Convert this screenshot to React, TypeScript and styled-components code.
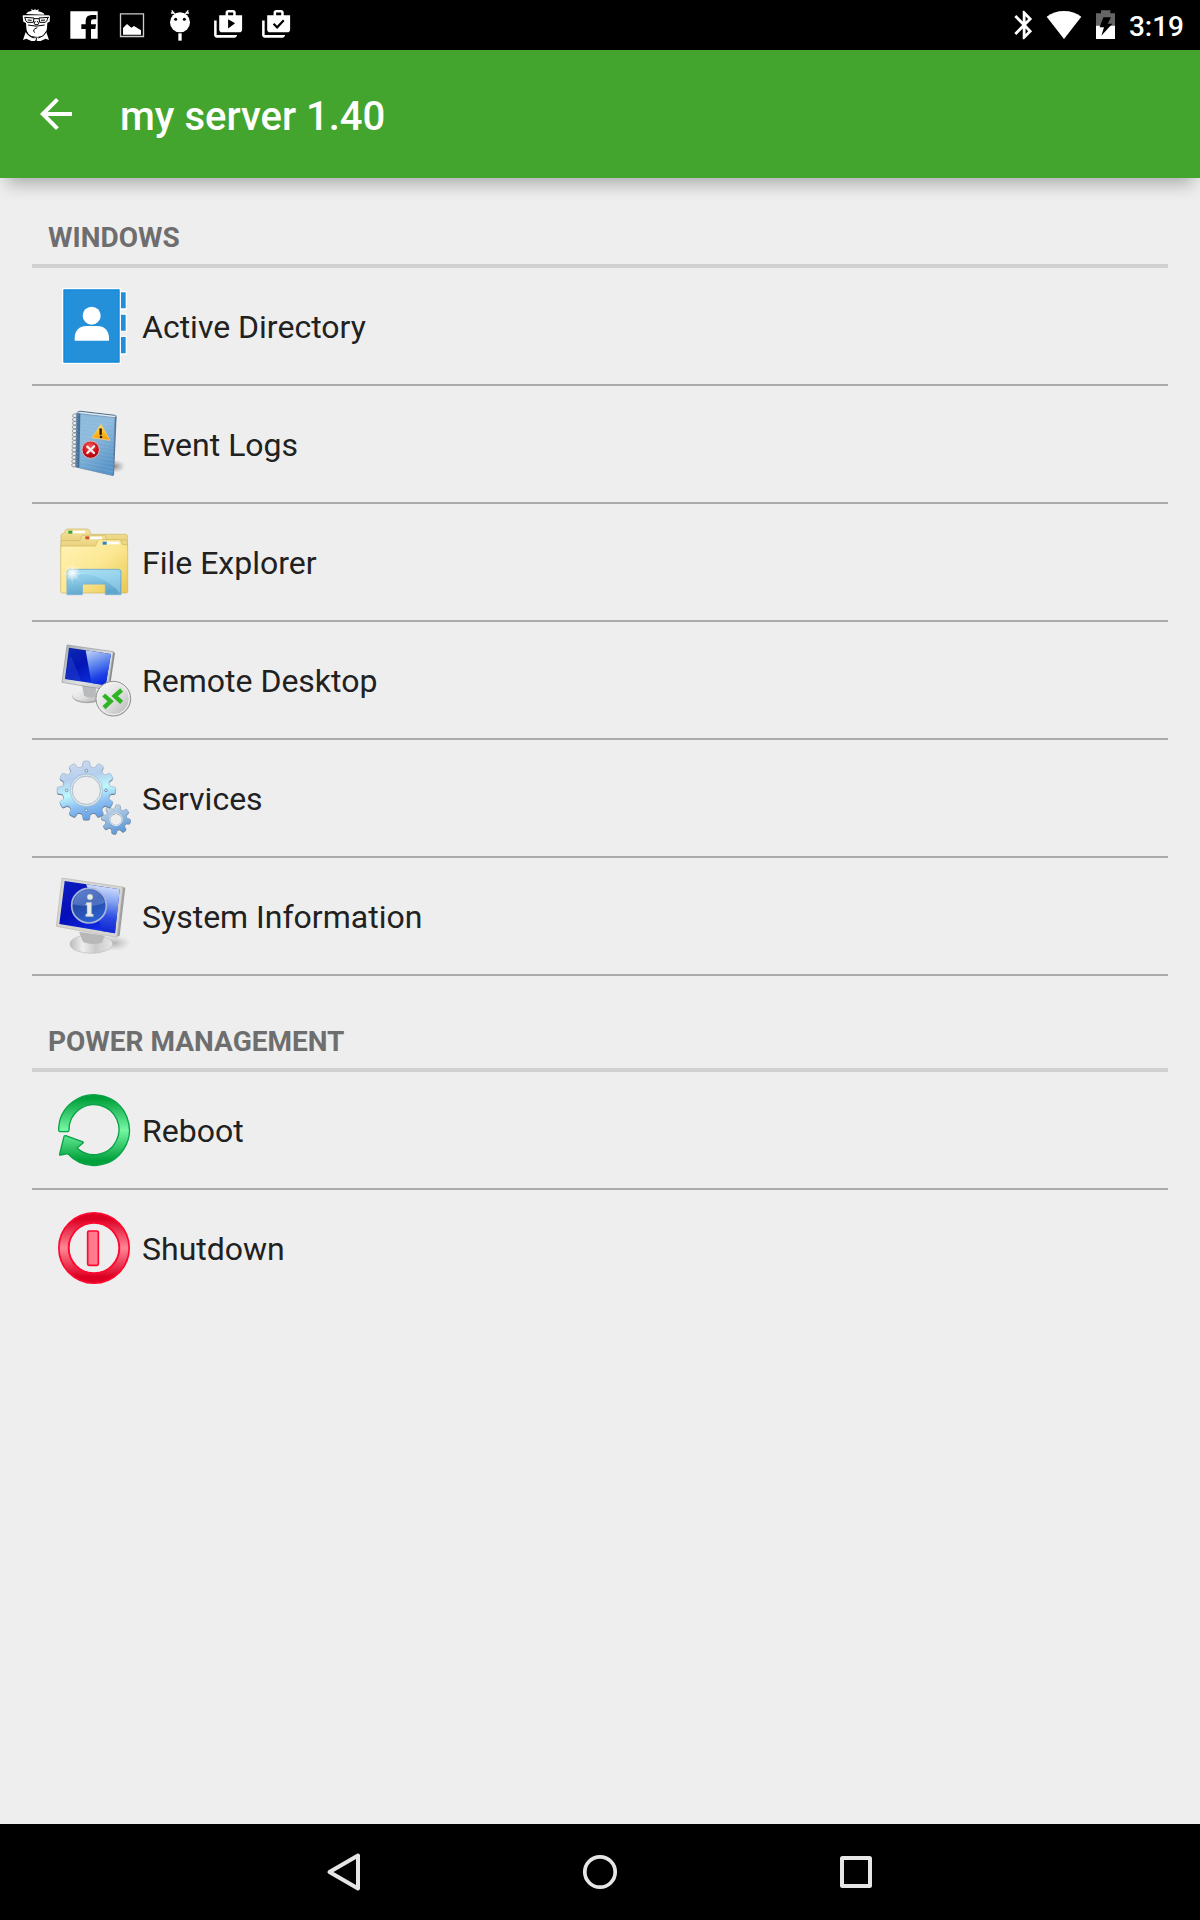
import React from 'react';
import styled, { createGlobalStyle } from 'styled-components';

const GlobalStyle = createGlobalStyle`
  body {
    margin: 0;
    background-color: #eeeeee;
    font-family: Roboto, 'Noto Sans', sans-serif;
  }
  svg {
    display: block;
    flex-shrink: 0;
  }
`;
const Screen = styled.div`
  display: flex;
  flex-direction: column;
  width: 1200px;
  height: 1920px;
  overflow: hidden;
  background-color: #eeeeee;
`;
const StatusBar = styled.div`
  display: flex;
  justify-content: space-between;
  height: 50px;
  padding: 0 16px 0 12px;
  background-color: #000;
  color: #fff;
`;
const StatusGroup = styled.div`
  display: flex;
  align-items: center;
`;
const Clock = styled.span`
  margin-left: 6px;
  padding-top: 3px;
  font-size: 28px;
  font-weight: 500;
  line-height: 34px;
`;
const Toolbar = styled.header`
  display: flex;
  align-items: center;
  height: 128px;
  padding-left: 32px;
  box-sizing: border-box;
  flex-shrink: 0;
  background-color: #43a52d;
  color: #fff;
  box-shadow: 0 13px 16px -7px rgba(0, 0, 0, 0.28);
`;
const Title = styled.h1`
  margin: 6px 0 0 40px;
  font-size: 40px;
  font-weight: 500;
  line-height: 48px;
`;
const Content = styled.main`
  flex: 1;
  padding: 26px 32px 0;
`;
const SectionTitle = styled.h2`
  margin: 0;
  height: 60px;
  padding: 0 16px;
  border-bottom: 4px solid #d0d0d0;
  color: #6e6e6e;
  font-size: 28px;
  font-weight: 700;
  line-height: 68px;
  text-transform: uppercase;
`;
const Section = styled.section`
  & + & {
    margin-top: 32px;
  }
`;
const List = styled.ul`
  margin: 0;
  padding: 0;
  list-style: none;
`;
const Item = styled.li<{ $divider: boolean }>`
  display: flex;
  align-items: center;
  height: 116px;
  padding-left: 22px;
  border-bottom: ${({ $divider }) => ($divider ? '2px solid #a9a9a9' : 'none')};
`;
const ItemLabel = styled.span`
  margin-left: 8px;
  padding-top: 2px;
  color: #212121;
  font-size: 32px;
  line-height: 38px;
`;
const NavBar = styled.nav`
  display: flex;
  justify-content: center;
  height: 96px;
  background-color: #000;
`;
const NavButton = styled.button`
  display: flex;
  align-items: center;
  justify-content: center;
  width: 256px;
  padding: 0;
  border: 0;
  background: none;
`;

type IconProps = {
  viewBox: string;
  children: React.ReactNode;
};

// every list icon is drawn on a 240 unit grid
function ListIcon({ viewBox, children }: IconProps) {
  return (
    <svg width="80" height="80" viewBox={viewBox}>
      {children}
    </svg>
  );
}

function NotificationIcon({ viewBox, children }: IconProps) {
  return (
    <svg width="48" height="50" viewBox={viewBox} fill="#fff">
      {children}
    </svg>
  );
}

function gearPath(cx: number, cy: number, outer: number, root: number, hole: number, teeth: number, turn = 0) {
  const step = (Math.PI * 2) / teeth;
  const at = (r: number, a: number) =>
    `${(cx + r * Math.sin(a)).toFixed(1)} ${(cy - r * Math.cos(a)).toFixed(1)}`;
  let d = '';
  for (let i = 0; i < teeth; i += 1) {
    const a = i * step + turn;
    d += `${i ? 'L' : 'M'}${at(root, a - step * 0.31)}L${at(outer - 3, a - step * 0.23)}`;
    d += `Q${at(outer, a - step * 0.2)} ${at(outer, a - step * 0.12)}L${at(outer, a + step * 0.12)}`;
    d += `Q${at(outer, a + step * 0.2)} ${at(outer - 3, a + step * 0.23)}L${at(root, a + step * 0.31)}`;
    d += `Q${at(root - 4, a + step * 0.5)} ${at(root, a + step * 0.69)}`;
  }
  return `${d}ZM${cx - hole} ${cy}a${hole} ${hole} 0 1 0 ${hole * 2} 0a${hole} ${hole} 0 1 0 ${-hole * 2} 0Z`;
}

function ActiveDirectoryIcon() {
  return (
    <ListIcon viewBox="72 48 240 240">
      <g fill="#1f8fdb" stroke="#fff" strokeWidth="4">
        <path d="M271 65h18v52h-18zM271 132h18v52h-18zM271 199h18v53h-18z" />
        <path d="M98 56h173v224H98z" />
      </g>
      <path
        d="M102.500 60.500h164v215h-164z"
        fill="#2490da"
        stroke="#0d86dc"
        strokeWidth="2"
      />
      <circle cx="185" cy="137" r="27" fill="#fff" />
      <path d="M134 212v-8c0-22 14-36 36-36h31c22 0 36 14 36 36v8z" fill="#fff" />
    </ListIcon>
  );
}

function EventLogsIcon() {
  const rings = Array.from({ length: 14 }, (_, i) => i);
  return (
    <ListIcon viewBox="12 27 240 240">
      <defs>
        <linearGradient id="book" x1="0" y1="0" x2="0.5" y2="1">
          <stop offset="0" stopColor="#8db8d9" />
          <stop offset="0.45" stopColor="#8ebbdd" />
          <stop offset="1" stopColor="#5b96c8" />
        </linearGradient>
        <linearGradient id="warn" x1="0" y1="0" x2="0" y2="1">
          <stop offset="0" stopColor="#ffe36a" />
          <stop offset="0.55" stopColor="#ffb91e" />
          <stop offset="1" stopColor="#f79a0c" />
        </linearGradient>
        <radialGradient id="error" cx="0.45" cy="0.3" r="0.7">
          <stop offset="0" stopColor="#ee5b5b" />
          <stop offset="0.6" stopColor="#cf1218" />
          <stop offset="1" stopColor="#a5060c" />
        </radialGradient>
        <radialGradient id="bookShadow">
          <stop offset="0" stopColor="#777" stopOpacity="0.8" />
          <stop offset="1" stopColor="#999" stopOpacity="0" />
        </radialGradient>
      </defs>
      <ellipse cx="194" cy="214" rx="32" ry="20" fill="url(#bookShadow)" />
      <path d="M79 52l11-5 109 13-4 5z" fill="#47688a" />
      <path d="M90 50l104 12 6-2-5 8-113-13z" fill="#e4ebf1" />
      <path d="M193 68l7-7-8 179-6 4z" fill="#54708d" />
      <path d="M80 55l115 13-6 174-112-26z" fill="url(#book)" stroke="#5d87ad" strokeWidth="2" />
      <path d="M80 55l11 1-3 162-11-2z" fill="#416f9e" />
      <g stroke="#b4d4ec" strokeWidth="1.500" opacity="0.35">
        {rings.map((i) => (
          <path key={i} d={`M92 ${68 + i * 11}l100 ${11 + i * 0.7}`} />
        ))}
      </g>
      <g fill="none" stroke="#858d94" strokeWidth="3">
        {rings.map((i) => (
          <path key={i} d={`M${86 - i * 0.2} ${62 + i * 11.400}c-6-7-17-7-18 0s10 6 15 3`} />
        ))}
      </g>
      <path
        d="M153 88l27 48-54-8z"
        fill="url(#warn)"
        stroke="#ebc77b"
        strokeWidth="3"
        strokeLinejoin="round"
      />
      <path d="M152 103v14" stroke="#211b12" strokeWidth="7" strokeLinecap="round" />
      <circle cx="153" cy="126" r="4" fill="#211b12" />
      <circle cx="122" cy="164" r="26" fill="url(#error)" stroke="#d9b5b8" strokeWidth="3" />
      <path d="M112 155l20 19M132 154l-20 20" stroke="#f0eded" strokeWidth="7" strokeLinecap="round" />
    </ListIcon>
  );
}

function FileExplorerIcon() {
  return (
    <ListIcon viewBox="12 21 240 240">
      <defs>
        <linearGradient id="folder" x1="0" y1="0" x2="1" y2="1">
          <stop offset="0" stopColor="#fff3b6" />
          <stop offset="0.5" stopColor="#fce894" />
          <stop offset="1" stopColor="#e9c751" />
        </linearGradient>
        <linearGradient id="folderBack" x1="0" y1="0" x2="0" y2="1">
          <stop offset="0" stopColor="#f3e29a" />
          <stop offset="1" stopColor="#e6ca6e" />
        </linearGradient>
        <linearGradient id="tray" x1="0" y1="0" x2="0.3" y2="1">
          <stop offset="0" stopColor="#a6def4" />
          <stop offset="0.5" stopColor="#85c6e4" />
          <stop offset="1" stopColor="#61a5cc" />
        </linearGradient>
        <radialGradient id="glow">
          <stop offset="0" stopColor="#fff" />
          <stop offset="0.2" stopColor="#fff" stopOpacity="0.75" />
          <stop offset="1" stopColor="#fff" stopOpacity="0" />
        </radialGradient>
      </defs>
      <g fill="url(#folderBack)" stroke="#cdb469" strokeWidth="2" strokeLinejoin="round">
        <path d="M33 100V61q0-3 3-4l7-3 4-9q1-3 5-3h60q4 0 6 4l5 12h104q5 0 5 5v37z" />
        <path d="M33 110V80q0-3 4-3h52l5-12q1-4 5-4h62q4 0 6 4l4 10h56q5 0 5 5v30z" />
      </g>
      <path
        d="M32 98q0-5 5-5h100l6-16q1-3 5-3h59q4 0 6 4l4 11h11q5 0 5 5v136q0 4-5 4H37q-5 0-5-4z"
        fill="url(#folder)"
        stroke="#cfb35f"
        strokeWidth="2"
      />
      <path d="M67 47h38v8H67zM119 65h37v8h-37zM170 80h38v8h-38z" fill="#fff" />
      <path d="M55 47h12v9H55z" fill="#3da33a" />
      <path d="M106 64h12v9h-12z" fill="#d35320" />
      <path d="M158 80h12v9h-12z" fill="#2d83c8" />
      <path
        d="M51 239v-68q0-8 8-8h146q8 0 8 8v68h-47v-29q0-3-3-3h-63q-3 0-3 3v29z"
        fill="url(#tray)"
        stroke="#7cb3cf"
        strokeWidth="3"
        strokeLinejoin="round"
      />
      <path d="M54 178q75-8 123 27 22 15 33 30v-62q0-7-7-7H60q-6 0-6 6z" fill="#b2e5f8" opacity="0.4" />
      <circle cx="67" cy="174" r="24" fill="url(#glow)" />
      <path
        d="M67 137l3 32 26-19-21 23 36 2-36 4 20 22-25-16-3 28-4-28-22 16 16-21-25-4 26-4-19-21 24 16z"
        fill="#fff"
        opacity="0.2"
      />
    </ListIcon>
  );
}

function RemoteDesktopIcon() {
  return (
    <ListIcon viewBox="12 30 240 240">
      <defs>
        <linearGradient id="rdScreen" x1="0" y1="0" x2="0.8" y2="1">
          <stop offset="0" stopColor="#0c2cae" />
          <stop offset="0.45" stopColor="#0414b4" />
          <stop offset="1" stopColor="#0b37e8" />
        </linearGradient>
        <linearGradient id="rdShine" x1="0.3" y1="0" x2="0.6" y2="1">
          <stop offset="0" stopColor="#b4caf6" />
          <stop offset="0.4" stopColor="#5c84ee" />
          <stop offset="0.75" stopColor="#1c40e6" />
          <stop offset="1" stopColor="#0a25dc" />
        </linearGradient>
        <linearGradient id="rdBezel" x1="0" y1="0" x2="1" y2="1">
          <stop offset="0" stopColor="#a8adb3" />
          <stop offset="0.6" stopColor="#e0e2e2" />
          <stop offset="1" stopColor="#b6b8ba" />
        </linearGradient>
        <linearGradient id="metal" x1="0" y1="0" x2="1" y2="1">
          <stop offset="0" stopColor="#f8f8f8" />
          <stop offset="0.55" stopColor="#dedede" />
          <stop offset="1" stopColor="#b0b0b0" />
        </linearGradient>
      </defs>
      <ellipse cx="112" cy="198" rx="45" ry="22" fill="#aaa" />
      <ellipse cx="110" cy="195" rx="43" ry="20" fill="url(#metal)" />
      <path d="M96 164l42 8-1 29q-20 6-35-4z" fill="#b8babb" />
      <path d="M188 66l7 2-17 115-8-1z" fill="#86898d" />
      <path d="M51 45l139 20-16 115L36 157z" fill="url(#rdBezel)" stroke="#93979b" strokeWidth="2" />
      <path d="M57 53l126 19-16 94L45 147z" fill="url(#rdScreen)" />
      <path d="M107 61l76 11-16 94-43-7z" fill="url(#rdShine)" />
      <path d="M57 85l7-4 30 73-49-8z" fill="#2548d1" opacity="0.45" />
      <circle cx="190" cy="206" r="52" fill="url(#metal)" stroke="#929292" strokeWidth="3" />
      <circle cx="190" cy="206" r="48" fill="none" stroke="#f4f4f4" strokeWidth="3" />
      <path
        d="M161 195l21 19-20 19M215 180l-21 18 21 19"
        fill="none"
        stroke="#2fb424"
        strokeWidth="13"
      />
    </ListIcon>
  );
}

function ServicesIcon() {
  return (
    <ListIcon viewBox="12 24 240 240">
      <defs>
        <linearGradient id="gearBig" x1="0.35" y1="0" x2="0.6" y2="1">
          <stop offset="0" stopColor="#cddaec" />
          <stop offset="0.28" stopColor="#b4cfee" />
          <stop offset="0.52" stopColor="#bef8fd" />
          <stop offset="0.74" stopColor="#8fc0f1" />
          <stop offset="1" stopColor="#5f9ce4" />
        </linearGradient>
        <linearGradient id="gearSmall" x1="0" y1="0" x2="0.4" y2="1">
          <stop offset="0" stopColor="#dde3e9" />
          <stop offset="0.5" stopColor="#9cbfe0" />
          <stop offset="1" stopColor="#5f9ad8" />
        </linearGradient>
      </defs>
      <path
        d={gearPath(198, 210, 44, 34, 18, 8, 0.15)}
        fill="#64788c"
        fillRule="evenodd"
      />
      <path
        d={gearPath(198, 208, 44, 34, 18, 8, 0.15)}
        fill="url(#gearSmall)"
        fillRule="evenodd"
        stroke="#7c96b2"
        strokeWidth="1.500"
      />
      <circle cx="198" cy="208" r="19" fill="none" stroke="#dce7ee" strokeWidth="3" />
      <path d={gearPath(109, 124, 88, 73, 48, 12)} fill="#59728c" fillRule="evenodd" />
      <path
        d={gearPath(109, 121, 88, 73, 44, 12)}
        fill="url(#gearBig)"
        fillRule="evenodd"
        stroke="#8ba5c1"
        strokeWidth="1.500"
      />
      <circle cx="109" cy="121" r="46" fill="none" stroke="#d9e6ec" strokeWidth="5" />
      <circle cx="109" cy="121" r="49" fill="none" stroke="#8eabc4" strokeWidth="1.500" />
      <circle cx="109" cy="121" r="42" fill="none" stroke="#8da7bb" strokeWidth="1.500" />
      <g fill="#e9f4fa" stroke="#5c84a8" strokeWidth="2.500">
        <circle cx="109" cy="62" r="4" />
        <circle cx="50" cy="121" r="4" />
        <circle cx="168" cy="121" r="4" />
        <circle cx="109" cy="181" r="4" />
      </g>
    </ListIcon>
  );
}

function SystemInfoIcon() {
  return (
    <ListIcon viewBox="12 33 240 240">
      <defs>
        <linearGradient id="siScreen" x1="0" y1="0" x2="0.7" y2="1">
          <stop offset="0" stopColor="#0d1fc0" />
          <stop offset="0.5" stopColor="#040eb8" />
          <stop offset="1" stopColor="#1230ea" />
        </linearGradient>
        <linearGradient id="siShine" x1="0.5" y1="0" x2="0.4" y2="1">
          <stop offset="0" stopColor="#d6e3fd" />
          <stop offset="0.3" stopColor="#8aa8f2" />
          <stop offset="0.65" stopColor="#2c4ce0" />
          <stop offset="1" stopColor="#0c20d0" />
        </linearGradient>
        <linearGradient id="siBadge" x1="0" y1="0" x2="0.4" y2="1">
          <stop offset="0" stopColor="#4b6fc8" />
          <stop offset="0.5" stopColor="#2449a6" />
          <stop offset="1" stopColor="#2b60cf" />
        </linearGradient>
        <radialGradient id="siShadow">
          <stop offset="0" stopColor="#888" stopOpacity="0.6" />
          <stop offset="1" stopColor="#aaa" stopOpacity="0" />
        </radialGradient>
        <linearGradient id="siBase" x1="0" y1="0" x2="1" y2="0">
          <stop offset="0" stopColor="#bcbcbc" />
          <stop offset="0.3" stopColor="#eeeeee" />
          <stop offset="0.6" stopColor="#cacaca" />
          <stop offset="1" stopColor="#e6e6e6" />
        </linearGradient>
      </defs>
      <ellipse cx="190" cy="234" rx="52" ry="24" fill="url(#siShadow)" />
      <ellipse cx="124" cy="237" rx="64" ry="28" fill="url(#siBase)" stroke="#bdbdbd" strokeWidth="2" />
      <path d="M87 200l78 12-10 21q-28 9-56-2z" fill="#b8b8b8" />
      <path d="M216 65l10 3-17 144-13 5z" fill="#9d9fa0" />
      <path d="M36 39l183 27-18 151L19 184z" fill="#d6d5cf" stroke="#b5b5b1" strokeWidth="2" />
      <path d="M44 48l165 25-14 132L28 177z" fill="url(#siScreen)" />
      <path d="M108 58l101 15-14 132-40-7q-12-67-47-140z" fill="url(#siShine)" />
      <circle cx="117" cy="122" r="52" fill="url(#siBadge)" stroke="#a7b6d6" strokeWidth="5" />
      <path d="M69 118q9-43 47-43t49 38q-44 18-96 5z" fill="#87a5e4" opacity="0.4" />
      <g fill="#e6ebe8" stroke="#8496a5" strokeWidth="1.500">
        <circle cx="120" cy="96" r="9" />
        <path d="M110 112h15v35h5v8h-23v-8h4v-27h-5z" />
      </g>
    </ListIcon>
  );
}

function RebootIcon() {
  return (
    <ListIcon viewBox="72 390 240 240">
      <defs>
        <linearGradient id="green" x1="0" y1="0" x2="0" y2="1">
          <stop offset="0.05" stopColor="#00a03a" />
          <stop offset="0.5" stopColor="#76f7a5" />
          <stop offset="0.93" stopColor="#00a03a" />
        </linearGradient>
      </defs>
      <path
        d="M90 515q-4 0-4-5A106 106 0 1 1 113 581L92 585q-4 1-3-3l13-52q1-4 5-3l50 18q5 2 1 5l-17 14A75 75 0 1 0 117 510q0 5-4 5z"
        fill="url(#green)"
        stroke="#08a246"
        strokeWidth="4"
        strokeLinejoin="round"
      />
    </ListIcon>
  );
}

function ShutdownIcon() {
  return (
    <ListIcon viewBox="72 84 240 240">
      <defs>
        <linearGradient id="red" x1="0" y1="0" x2="0" y2="1">
          <stop offset="0.08" stopColor="#dc0023" />
          <stop offset="0.5" stopColor="#ff8796" />
          <stop offset="0.92" stopColor="#dc0023" />
        </linearGradient>
      </defs>
      <circle cx="192" cy="204" r="90.500" fill="none" stroke="#ff0830" strokeWidth="35" />
      <path
        d="M89 204a103 103 0 1 0 206 0a103 103 0 1 0-206 0M113 204a79 79 0 1 1 158 0a79 79 0 1 1-158 0"
        fill="url(#red)"
        fillRule="evenodd"
      />
      <rect x="173" y="153" width="32" height="103" rx="4" fill="#ff7b8d" stroke="#ff0830" strokeWidth="5" />
    </ListIcon>
  );
}

const sections = [
  {
    title: 'Windows',
    trailingDivider: true,
    items: [
      { label: 'Active Directory', Icon: ActiveDirectoryIcon },
      { label: 'Event Logs', Icon: EventLogsIcon },
      { label: 'File Explorer', Icon: FileExplorerIcon },
      { label: 'Remote Desktop', Icon: RemoteDesktopIcon },
      { label: 'Services', Icon: ServicesIcon },
      { label: 'System Information', Icon: SystemInfoIcon },
    ],
  },
  {
    title: 'Power Management',
    trailingDivider: false,
    items: [
      { label: 'Reboot', Icon: RebootIcon },
      { label: 'Shutdown', Icon: ShutdownIcon },
    ],
  },
];

function Notifications() {
  return (
    <StatusGroup>
      <NotificationIcon viewBox="36 0 144 150">
        <path d="M78 42q6-9 17-9l-2-6 9 4 3-5 3 5 9-3-3 6q15 2 20 10z" />
        <path d="M69 46h78l3 3-1 16-7 3-1 15q-1 17-14 25l-16 3-17-3q-15-8-15-25l-1-14-8-4-2-16z" />
        <path d="M77 96q8 16 31 17 23-1 31-17l8 24-10-4-15 7h-10l-4-4-4 4H94l-15-7-10 4z" />
        <g fill="none" stroke="#000" strokeWidth="3">
          <path d="M73 52l29 2-2 13H82q-6-4-7-13M147 52l-30 2 2 13h17q6-4 7-13M102 56h15" />
          <path d="M83 60l12 1M123 61l12-1M106 63q-6 8-1 11h9q5-3-2-11M84 75q24 7 50 0M104 98q-9-10 8-15M79 94q6 16 24 20M139 94q-6 16-24 20M109 114v6" />
        </g>
      </NotificationIcon>
      <NotificationIcon viewBox="180 0 144 150">
        <path d="M211 34h82v82h-20V87h13l2-14h-15v-9q0-6 7-6h9V45h-14q-18 0-18 18v10h-13v14h13v29h-46z" />
      </NotificationIcon>
      <NotificationIcon viewBox="324 0 144 150">
        <path d="M361.500 41.500h69v68h-69z" fill="none" stroke="#c9cec9" strokeWidth="4" />
        <path d="M369 104V84l12-12 13 11 8-5 21 13v13z" />
      </NotificationIcon>
      <NotificationIcon viewBox="468 0 144 150">
        <circle cx="540" cy="67" r="30" />
        <path d="M535 100h10v22h-10z" />
        <path d="M515 31l10 12M513 39h9M565 31l-10 12M567 39h-9" stroke="#fff" strokeWidth="4" />
        <circle cx="527" cy="58" r="4.500" fill="#000" />
        <circle cx="553" cy="58" r="4.500" fill="#000" />
      </NotificationIcon>
      <NotificationIcon viewBox="612 0 144 150">
        <g transform="translate(638.5 26) scale(3.82 3.95)">
          <path d="M3 9H1v11c0 1.110.89 2 2 2h14c1.110 0 2-.89 2-2H3V9z" />
          <path d="M18 5V3c0-1.110-.89-2-2-2h-4c-1.110 0-2 .89-2 2v2H5v11c0 1.110.89 2 2 2h14c1.110 0 2-.89 2-2V5h-5zm-6-2h4v2h-4V3zm0 12V8l5.500 3-5.500 4z" />
        </g>
      </NotificationIcon>
      <NotificationIcon viewBox="756 0 144 150">
        <g transform="translate(782.5 26) scale(3.82 3.95)">
          <path d="M3 9H1v11c0 1.110.89 2 2 2h14c1.110 0 2-.89 2-2H3V9z" />
          <path d="M18 5V3c0-1.110-.89-2-2-2h-4c-1.110 0-2 .89-2 2v2H5v11c0 1.110.89 2 2 2h14c1.110 0 2-.89 2-2V5h-5zm-6-2h4v2h-4V3z" />
          <path d="M10 11.500l2.800 2.700 5.200-5.400" fill="none" stroke="#000" strokeWidth="1.700" />
        </g>
      </NotificationIcon>
    </StatusGroup>
  );
}

function SystemStatus() {
  return (
    <StatusGroup>
      <svg width="36" height="50" viewBox="45 0 108 150">
        <path
          transform="translate(52 23.5) scale(4.2 4.3)"
          d="M17.710 7.710L12 2h-1v7.590L6.410 5 5 6.410 10.590 12 5 17.590 6.410 19 11 14.410V22h1l5.710-5.710-4.300-4.290 4.300-4.290zM13 5.830l1.880 1.880L13 9.590V5.830zm1.880 10.460L13 18.170v-3.760l1.880 1.880z"
          fill="#fff"
        />
      </svg>
      <svg width="46" height="50" viewBox="153 0 138 150">
        <path d="M170 50q22-17 52-17t52 17l-52 67z" fill="#fff" />
      </svg>
      <svg width="36" height="50" viewBox="291 0 108 150">
        <path d="M318 77V40h15v-9h28v9h14v37z" fill="#666" />
        <path d="M318 77h57v40h-57z" fill="#fff" />
        <path d="M340 52h23l-10 19h14l-33 36 8-25h-13z" />
      </svg>
      <Clock>3:19</Clock>
    </StatusGroup>
  );
}

function App() {
  return (
    <>
      <GlobalStyle />
      <Screen>
        <StatusBar>
          <Notifications />
          <SystemStatus />
        </StatusBar>
        <Toolbar>
          <svg width="48" height="48" viewBox="0 0 24 24" fill="#fff">
            <path d="M20 11H7.830l5.590-5.590L12 4l-8 8 8 8 1.410-1.410L7.830 13H20v-2z" />
          </svg>
          <Title>my server 1.40</Title>
        </Toolbar>
        <Content>
          {sections.map(({ title, trailingDivider, items }) => (
            <Section key={title}>
              <SectionTitle>{title}</SectionTitle>
              <List>
                {items.map(({ label, Icon }, i) => (
                  <Item key={label} $divider={trailingDivider || i < items.length - 1}>
                    <Icon />
                    <ItemLabel>{label}</ItemLabel>
                  </Item>
                ))}
              </List>
            </Section>
          ))}
        </Content>
        <NavBar>
          <NavButton aria-label="Back">
            <svg width="40" height="40" viewBox="0 0 40 40" fill="none" stroke="#e6e6e6" strokeWidth="4">
              <path d="M34 3.500v33L5.500 20z" strokeLinejoin="round" />
            </svg>
          </NavButton>
          <NavButton aria-label="Home">
            <svg width="40" height="40" viewBox="0 0 40 40" fill="none" stroke="#e6e6e6" strokeWidth="3.700">
              <circle cx="20" cy="20" r="15.200" />
            </svg>
          </NavButton>
          <NavButton aria-label="Recent apps">
            <svg width="40" height="40" viewBox="0 0 40 40" fill="none" stroke="#e6e6e6" strokeWidth="4">
              <rect x="6" y="6" width="28" height="28" rx="0.500" strokeLinejoin="round" />
            </svg>
          </NavButton>
        </NavBar>
      </Screen>
    </>
  );
}

export default App;
